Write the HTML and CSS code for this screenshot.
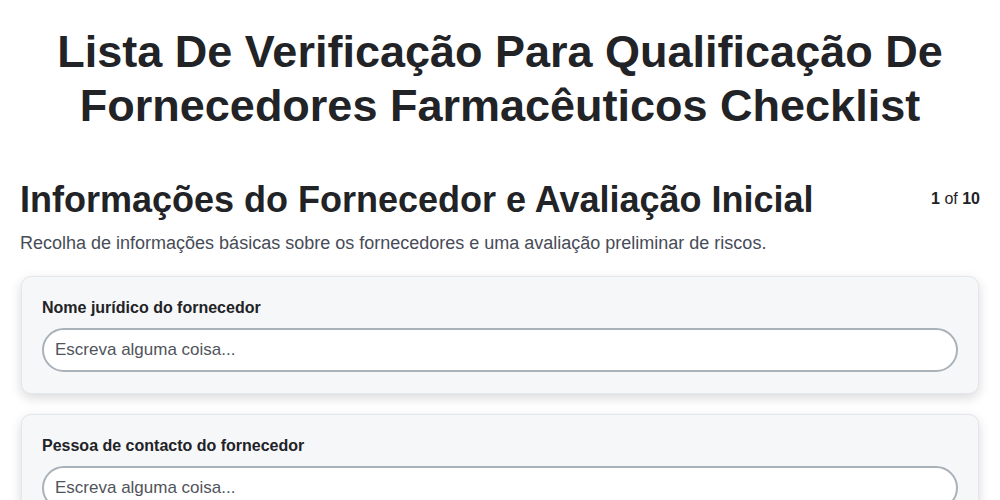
FILE: index.html
```html
<!DOCTYPE html>
<html lang="pt">
<head>
    <meta charset="UTF-8">
    <meta name="viewport" content="width=device-width, initial-scale=1.0">
    <title>Lista De Verificação Para Qualificação De Fornecedores Farmacêuticos Checklist</title>
    <link rel="stylesheet" href="styles.css">
</head>
<body>
    <h1 class="titulo">Lista De Verificação Para Qualificação De Fornecedores Farmacêuticos Checklist</h1>
    <div class="seccao">
        <div class="cabecalho">
            <h2>Informações do Fornecedor e Avaliação Inicial</h2>
            <span class="paginas"><b>1</b> of <b>10</b></span>
        </div>
        <p class="descricao">Recolha de informações básicas sobre os fornecedores e uma avaliação preliminar de riscos.</p>
        <div class="cartao">
            <label for="nome">Nome jurídico do fornecedor</label>
            <input type="text" id="nome" class="campo" placeholder="Escreva alguma coisa...">
        </div>
        <div class="cartao">
            <label for="contacto">Pessoa de contacto do fornecedor</label>
            <input type="text" id="contacto" class="campo" placeholder="Escreva alguma coisa...">
        </div>
    </div>
</body>
</html>
```
FILE: styles.css
```css
body {
    font-family: 'Liberation Sans', Arial, sans-serif;
    background: #ffffff;
    color: #222326;
    margin: 0;
    padding: 25px 20px 20px;
}

.titulo {
    font-size: 45px;
    line-height: 54px;
    text-align: center;
    margin: 0 0 46px;
    color: #222326;
}

.cabecalho {
    display: flex;
    justify-content: space-between;
    align-items: flex-start;
}

.cabecalho h2 {
    font-size: 36px;
    line-height: 42px;
    margin: 0;
}

.paginas {
    font-size: 16px;
    line-height: 20px;
    margin-top: 10px;
    color: #222326;
}

.descricao {
    font-size: 18px;
    color: #474c57;
    margin: 12px 0 22px;
}

.cartao {
    background: #f6f7f9;
    border: 1px solid #e3e6ea;
    border-radius: 10px;
    box-shadow: 0px 4px 12px rgba(0, 0, 0, 0.15);
    padding: 21px 20px 21px;
    margin: 0 1px 20px;
    display: flex;
    flex-direction: column;
}

.cartao label {
    font-size: 16px;
    font-weight: bold;
    line-height: 20px;
    margin-bottom: 10px;
}

.campo {
    font-family: 'Liberation Sans', Arial, sans-serif;
    font-size: 17px;
    height: 44px;
    box-sizing: border-box;
    padding: 0 11px;
    border: 2px solid #a9b1b9;
    border-radius: 22px;
    background: white;
    color: #222326;
}

.campo::placeholder {
    color: #50545c;
}
```
